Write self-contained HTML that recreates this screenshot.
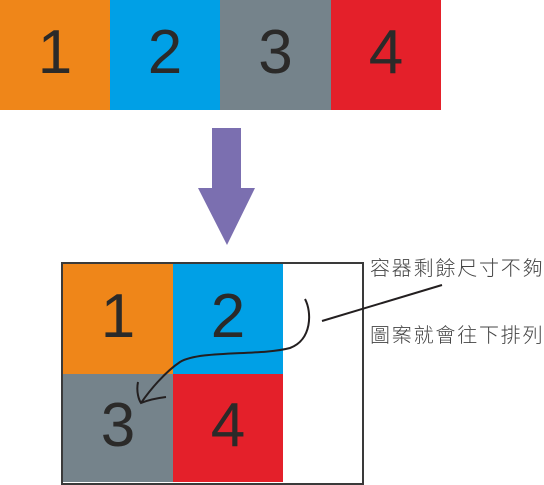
<!DOCTYPE html>
<html><head><meta charset="utf-8"><style>
body{margin:0;width:544px;height:485px;background:#fff;position:relative;overflow:hidden;font-family:"Liberation Sans",sans-serif}
.b{position:absolute;display:flex;align-items:center;justify-content:center;font-size:62px;color:#2b2a29;line-height:1;padding-bottom:4px;box-sizing:border-box}
.t{position:absolute;left:370px;white-space:nowrap;font-family:"Liberation Sans","Noto Sans CJK TC",sans-serif;font-size:20px;color:#444;letter-spacing:1.8px;font-weight:300}
</style></head><body>
<div class="b" style="left:0;top:0;width:110px;height:110px;background:#ef8619">1</div>
<div class="b" style="left:110px;top:0;width:110px;height:110px;background:#00a0e6">2</div>
<div class="b" style="left:220px;top:0;width:111px;height:110px;background:#75838b">3</div>
<div class="b" style="left:331px;top:0;width:110px;height:110px;background:#e4202a">4</div>
<svg style="position:absolute;left:0;top:0" width="544" height="485">
<polygon points="212,128 241,128 241,188 255,188 227,245 198,188 212,188" fill="#7b6fb0"/>
</svg>
<div style="position:absolute;left:61px;top:262px;width:299px;height:219px;border:2px solid #3a3a3a"></div>
<div class="b" style="left:63px;top:264px;width:110px;height:110px;background:#ef8619">1</div>
<div class="b" style="left:173px;top:264px;width:110px;height:110px;background:#00a0e6">2</div>
<div class="b" style="left:63px;top:374px;width:110px;height:108px;background:#75838b">3</div>
<div class="b" style="left:173px;top:374px;width:110px;height:108px;background:#e4202a">4</div>
<svg style="position:absolute;left:0;top:0" width="544" height="485" fill="none" stroke="#231f20" stroke-width="2">
<path d="M322,321 L442,285"/>
<path d="M305,299 C312,312 312,340 290,348 C260,356 200,350 180,362 C165,372 150,390 141,403"/>
<path d="M138,382 C136,392 139,400 141,403 C148,400 158,398 166,397"/>
</svg>
<div class="t" style="top:252px">容器剩餘尺寸不夠</div>
<div class="t" style="top:319px">圖案就會往下排列</div>
</body></html>
